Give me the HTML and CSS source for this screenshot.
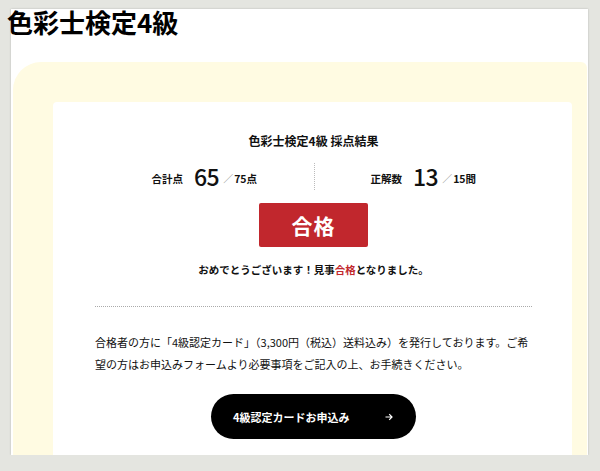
FILE: index.html
```html
<!DOCTYPE html>
<html lang="ja">
  <head>
    <meta charset="utf-8">
    <meta name="viewport" content="width=device-width, initial-scale=1">
    <title>色彩士検定4級 採点結果</title>
    <link rel="stylesheet" href="styles.css">
  </head>
  <body>
    <div class="sheet">
      <h1 class="page-title">色彩士検定4級</h1>
      <div class="result-bg">
        <section class="result-card">
          <h2 class="result-heading">色彩士検定4級 採点結果</h2>
          <div class="scores">
            <div class="score">
              <span class="score-label">合計点</span>
              <span class="score-value">65</span>
              <span class="score-slash">／</span>
              <span class="score-total">75点</span>
            </div>
            <div class="score">
              <span class="score-label">正解数</span>
              <span class="score-value">13</span>
              <span class="score-slash">／</span>
              <span class="score-total">15問</span>
            </div>
          </div>
          <div class="verdict">合格</div>
          <p class="congrats">おめでとうございます！見事<em>合格</em>となりました。</p>
          <hr class="divider">
          <p class="notice">合格者の方に「4級認定カード」（3,300円（税込）送料込み）を発行しております。ご希望の方はお申込みフォームより必要事項をご記入の上、お手続きください。</p>
          <div class="apply">
            <a class="apply-btn" href="#">
              <span>4級認定カードお申込み</span>
              <svg class="arrow" width="8" height="8" viewBox="0 0 8 8"><path d="M0.5 4H7M4.2 1.2L7 4L4.2 6.8" fill="none" stroke="#fff" stroke-width="1.2"/></svg>
            </a>
          </div>
        </section>
      </div>
    </div>
  </body>
</html>
```

FILE: styles.css
```css
body {
  margin: 0;
  padding: 12px 12px 0 11px;
  background: #e4e5e0;
  font-family: "Noto Sans CJK JP", "Noto Sans", sans-serif;
  color: #111;
}

.sheet {
  height: 446px;
  background: #fff;
  box-shadow: 0 0 2px rgba(0, 0, 0, 0.2);
  padding: 0 1px 0 2px;
}

.page-title {
  margin: -3px 0 0 -6px;
  font-size: 26px;
  line-height: 26px;
  font-weight: 700;
  color: #000;
}

.result-bg {
  margin-top: 27px;
  padding: 40px 15px 0 40px;
  background: #fffbe2;
  border-radius: 28px 6px 0 0;
  height: 356px;
  overflow: hidden;
}

.result-card {
  background: #fff;
  border-radius: 4px 4px 0 0;
  height: 100%;
  padding: 30px 40px 0 42px;
  text-align: center;
}

.result-heading {
  margin: 0;
  font-size: 12px;
  line-height: 18px;
  font-weight: 700;
}

.scores {
  display: grid;
  grid-template-columns: 1fr 1fr;
  margin-top: 13px;
}

.score {
  display: flex;
  align-items: center;
  justify-content: center;
  height: 27px;
}

.score + .score {
  border-left: 1px dotted #bbb;
}

.score-label {
  font-size: 10.5px;
  font-weight: 700;
  margin: 3px 11px 0 0;
}

.score-value {
  font-size: 23px;
  line-height: 27px;
  font-weight: 500;
  letter-spacing: -0.5px;
}

.score-slash {
  font-size: 10px;
  color: #777;
  margin: 3px 1px 0 4px;
  font-weight: 300;
}

.score-total {
  font-size: 10.5px;
  font-weight: 700;
  margin-top: 3px;
}

.verdict {
  width: 109px;
  height: 44px;
  margin: 13px auto 0;
  background: #c1272d;
  border-radius: 2px;
  color: #fff;
  font-size: 21px;
  font-weight: 700;
  line-height: 44px;
  letter-spacing: 1px;
}

.congrats {
  margin: 15px 0 0;
  font-size: 10.5px;
  line-height: 16px;
  font-weight: 700;
}

.congrats em {
  font-style: normal;
  color: #c1272d;
}

.divider {
  margin: 28px 0 0;
  border: 0;
  border-top: 1px dotted #aaa;
}

.notice {
  margin: 24px 0 0;
  font-size: 11px;
  line-height: 22px;
  text-align: left;
}

.apply {
  margin-top: 19px;
}

.apply-btn {
  display: inline-flex;
  align-items: center;
  justify-content: space-between;
  box-sizing: border-box;
  width: 205px;
  height: 45px;
  padding: 0 23px 0 22px;
  background: #000;
  border-radius: 23px;
  color: #fff;
  font-size: 11px;
  font-weight: 700;
  text-decoration: none;
}
```
